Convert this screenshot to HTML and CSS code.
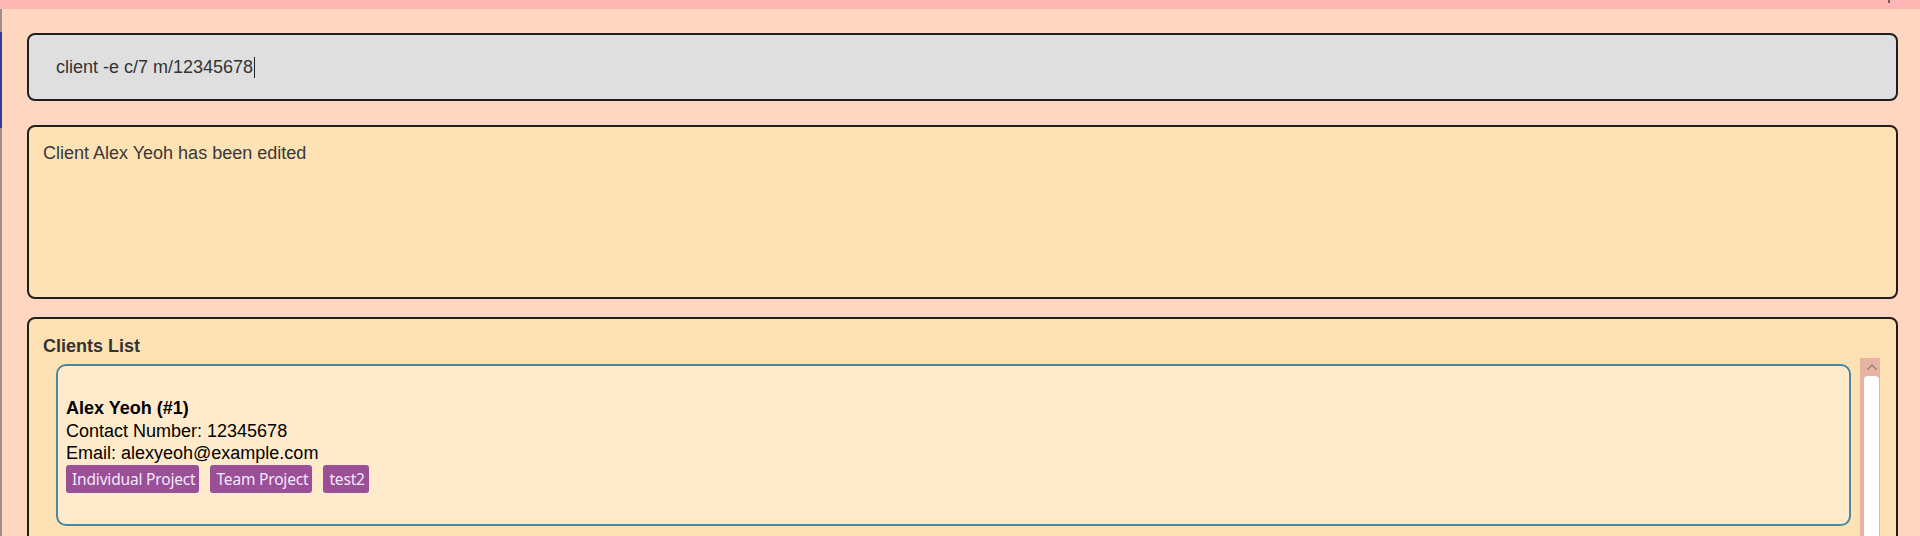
FILE: index.html
```html
<!DOCTYPE html>
<html lang="en">
<head>
<meta charset="utf-8">
<title>Clients</title>
<link rel="stylesheet" href="styles.css">
</head>
<body>
<div class="topbar"><span class="topbar-mark"></span></div>
<div class="window">
  <div class="side-strip"><div class="side-accent"></div></div>
  <main class="content">
    <div class="command-box">
      <span class="command-text">client -e c/7 m/12345678</span><span class="caret"></span>
    </div>
    <div class="result-box">Client Alex Yeoh has been edited</div>
    <section class="list-box">
      <h2 class="list-title">Clients List</h2>
      <div class="list-area">
        <div class="cards">
          <div class="card">
            <div class="card-name">Alex Yeoh (#1)</div>
            <div class="card-line">Contact Number: 12345678</div>
            <div class="card-line">Email: alexyeoh@example.com</div>
            <div class="tags">
              <span class="tag">Individual Project</span>
              <span class="tag">Team Project</span>
              <span class="tag">test2</span>
            </div>
          </div>
          <div class="card card-next"></div>
        </div>
        <div class="scrollbar">
          <div class="scroll-up"><svg width="12" height="8" viewBox="0 0 12 8"><path d="M1.5 6.5 L6 2 L10.5 6.5" fill="none" stroke="#8a7f7f" stroke-width="1.3"/></svg></div>
          <div class="scroll-thumb"></div>
        </div>
      </div>
    </section>
  </main>
</div>
</body>
</html>
```
FILE: styles.css
```css
html, body {
  margin: 0;
  padding: 0;
  height: 536px;
  overflow: hidden;
}
body {
  background: #ffd6c0;
  font-family: "Liberation Sans", Arial, sans-serif;
}
.topbar {
  height: 9px;
  background: #ffb6b5;
  position: relative;
}
.topbar-mark {
  position: absolute;
  left: 1888px;
  top: 0;
  width: 2px;
  height: 3px;
  background: #7a5a5a;
}
.window {
  display: flex;
  height: 527px;
}
.side-strip {
  width: 2px;
  background: #9a9090;
  flex: none;
}
.side-accent {
  margin-top: 23px;
  height: 96px;
  background: #2d3f94;
}
.content {
  flex: 1;
  padding: 24px 22px 0 25px;
  display: flex;
  flex-direction: column;
  min-width: 0;
}
.command-box {
  flex: none;
  height: 68px;
  box-sizing: border-box;
  border: 2px solid #1f1f1f;
  border-radius: 8px;
  background: #dfdfdf;
  display: flex;
  align-items: center;
  padding-left: 27px;
  font-size: 18px;
  color: #333333;
}
.caret {
  display: inline-block;
  width: 0;
  height: 21px;
  border-left: 1px solid #222;
  margin-left: 1px;
}
.result-box {
  flex: none;
  margin-top: 24px;
  height: 174px;
  box-sizing: border-box;
  border: 2px solid #1f1f1f;
  border-radius: 8px;
  background: #ffe2b4;
  padding: 16px 14px;
  font-size: 18px;
  line-height: 21px;
  color: #383838;
}
.list-box {
  flex: none;
  margin-top: 18px;
  border: 2px solid #1f1f1f;
  border-radius: 8px;
  background: #ffe2b4;
  padding: 16px 16px 0 14px;
}
.list-title {
  margin: 0;
  font-size: 18px;
  line-height: 22px;
  font-weight: bold;
  color: #333333;
}
.list-area {
  display: flex;
  margin-top: 1px;
  gap: 9px;
}
.cards {
  flex: 1;
  padding-top: 6px;
  padding-left: 13px;
  display: flex;
  flex-direction: column;
  gap: 10px;
}
.card {
  border: 2px solid #4a87a1;
  border-radius: 10px;
  background: #ffebcc;
  padding: 31px 8px;
  color: #000;
  font-size: 18px;
  line-height: 22.5px;
}
.card-next {
  height: 96px;
}
.card-name {
  font-weight: bold;
}
.tags {
  display: flex;
  gap: 11px;
}
.tag {
  background: #9b4f96;
  color: #f2e8ff;
  font-family: "Noto Sans", "Open Sans", sans-serif;
  font-size: 15.5px;
  letter-spacing: -0.18px;
  line-height: 28px;
  height: 28px;
  padding: 0 4px 0 6px;
  border-radius: 3px;
}
.scrollbar {
  width: 20px;
  flex: none;
  background: #e9b3a3;
  display: flex;
  flex-direction: column;
  align-items: center;
  padding-left: 3px;
  box-sizing: border-box;
}
.scroll-up {
  height: 18px;
  display: flex;
  align-items: center;
  justify-content: center;
  width: 100%;
}
.scroll-thumb {
  width: 15px;
  height: 400px;
  background: #ffffff;
  border-radius: 4px 4px 0 0;
}
```
